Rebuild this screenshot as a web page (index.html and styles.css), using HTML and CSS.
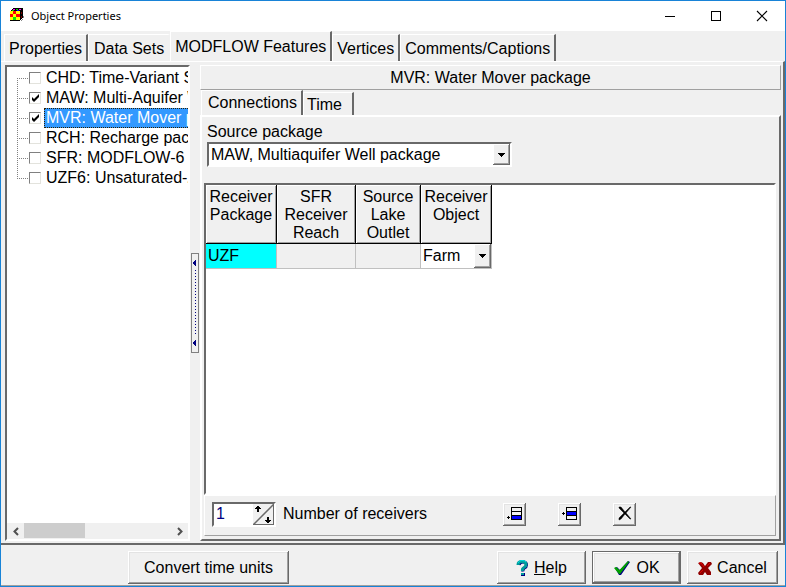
FILE: index.html
```html
<!DOCTYPE html>
<html lang="en">
<head>
<meta charset="utf-8">
<title>Object Properties</title>
<link rel="stylesheet" href="styles.css">
</head>
<body>
<div class="window">
  <header class="titlebar">
    <svg class="app-icon" width="16" height="16" viewBox="0 0 16 16" shape-rendering="crispEdges" aria-hidden="true">
      <path d="M1 4h1V3h1V2h1V1h10v10h-1v1h-1v1h-1v1H1z" fill="#000"/>
      <path d="M4 2h2v1H4zM10 2h2v1h-2z" fill="#f0f"/><path d="M7 2h2v1H7zM3 3h2v1H3z" fill="#0c0"/><path d="M8 3h2v1H8z" fill="#00f"/>
      <path d="M1 4h3v3H1zM7 4h4v3H7zM4 7h3v3H4zM1 10h3v3H1zM7 10h4v3H7z" fill="#ff0"/>
      <path d="M4 4h3v3H4zM7 7h4v3H7zM1 7h3v3H1z" fill="#f00"/>
      <path d="M4 10h3v3H4z" fill="#0e0"/><path d="M4 4h3v3H4z" fill="#f00"/>
      <path d="M12 5h1v2h-1zM12 9h1v2h-1z" fill="#800000"/>
      <path d="M14 9h1v2h-1zM13 12h1v1h-1zM12 13h1v1h-1z" fill="#888"/>
    </svg>
    <h1 class="title">Object Properties</h1>
    <div class="window-buttons">
      <button type="button" aria-label="Minimize"><svg width="12" height="12" shape-rendering="crispEdges"><path d="M1 6h10v1H1z"/></svg></button>
      <button type="button" aria-label="Maximize"><svg width="12" height="12" shape-rendering="crispEdges"><path d="M1.500 1.500h9v9h-9z" fill="none" stroke="#000"/></svg></button>
      <button type="button" aria-label="Close"><svg width="12" height="12"><path d="M1 1 11 11M11 1 1 11" fill="none" stroke="#000" stroke-width="1.100"/></svg></button>
    </div>
  </header>

  <nav class="tabs main-tabs" role="tablist">
    <button type="button" role="tab" class="tab">Properties</button>
    <button type="button" role="tab" class="tab flat">Data Sets</button>
    <button type="button" role="tab" class="tab active" aria-selected="true">MODFLOW Features</button>
    <button type="button" role="tab" class="tab">Vertices</button>
    <button type="button" role="tab" class="tab">Comments/Captions</button>
  </nav>

  <main class="page">
    <section class="tree">
      <ul class="tree-list">
        <li><label><input type="checkbox"><span>CHD: Time-Variant Specified-Head package</span></label></li>
        <li><label><input type="checkbox" checked><span>MAW: Multi-Aquifer Well package</span></label></li>
        <li class="selected"><label><input type="checkbox" checked><span>MVR: Water Mover package</span></label></li>
        <li><label><input type="checkbox"><span>RCH: Recharge package</span></label></li>
        <li><label><input type="checkbox"><span>SFR: MODFLOW-6 - Stream package</span></label></li>
        <li><label><input type="checkbox"><span>UZF6: Unsaturated-Zone Flow package</span></label></li>
      </ul>
      <div class="scrollbar">
        <button type="button" aria-label="Scroll left"><svg width="8" height="9"><path d="M6 1 2.500 4.500 6 8" fill="none" stroke="#505050" stroke-width="2"/></svg></button>
        <div class="track"><div class="thumb"></div></div>
        <button type="button" aria-label="Scroll right"><svg width="8" height="9"><path d="M2 1 5.500 4.500 2 8" fill="none" stroke="#505050" stroke-width="2"/></svg></button>
      </div>
    </section>

    <div class="splitter">
      <div class="grip">
        <svg width="4" height="6" shape-rendering="crispEdges"><path d="M3 0v6h-1v-1h-1v-1h-1v-2h1v-1h1v-1z" fill="#000080"/></svg>
        <span class="dots"></span>
        <svg width="4" height="6" shape-rendering="crispEdges"><path d="M3 0v6h-1v-1h-1v-1h-1v-2h1v-1h1v-1z" fill="#000080"/></svg>
      </div>
    </div>

    <section class="detail">
      <h2 class="package-title">MVR: Water Mover package</h2>
      <nav class="tabs sub-tabs" role="tablist">
        <button type="button" role="tab" class="tab active" aria-selected="true">Connections</button>
        <button type="button" role="tab" class="tab">Time</button>
      </nav>
      <div class="subpage">
        <div class="source">
          <label for="source">Source package</label>
          <div class="combo source-combo">
            <select id="source"><option>MAW, Multiaquifer Well package</option></select>
            <span class="drop"><svg width="7" height="4" shape-rendering="crispEdges"><path d="M0 0h7v1h-1v1h-1v1h-1v1h-1v-1h-1v-1h-1v-1h-1z"/></svg></span>
          </div>
        </div>
        <div class="grid-box">
          <table class="grid">
            <colgroup><col class="c-package"><col class="c-reach"><col class="c-outlet"><col class="c-object"></colgroup>
            <thead><tr>
              <th>Receiver<br>Package</th><th>SFR<br>Receiver<br>Reach</th><th>Source<br>Lake<br>Outlet</th><th>Receiver<br>Object</th>
            </tr></thead>
            <tbody><tr>
              <td class="current">UZF</td><td class="off"></td><td class="off"></td>
              <td class="edit"><div class="combo cell-combo">
                <select aria-label="Receiver Object"><option>Farm</option></select>
                <span class="drop"><svg width="7" height="4" shape-rendering="crispEdges"><path d="M0 0h7v1h-1v1h-1v1h-1v1h-1v-1h-1v-1h-1v-1h-1z"/></svg></span>
              </div></td>
            </tr></tbody>
          </table>
        </div>
        <div class="grid-tools">
          <div class="spin">
            <input id="count" type="text" inputmode="numeric" value="1">
            <button type="button" aria-label="Change number of receivers"><svg width="21" height="21">
              <path d="M0 21 21 0" stroke="#696969" stroke-width="1.500"/>
              <g shape-rendering="crispEdges"><path d="M5 2h1v1h1v1h1v1h-2v3h-2v-3h-2v-1h1v-1h1v-1h1z"/>
              <path d="M14 13h2v3h2v1h-1v1h-1v1h-2v-1h-1v-1h-1v-1h2z"/></g>
            </svg></button>
          </div>
          <label for="count">Number of receivers</label>
          <div class="row-buttons">
            <button type="button" class="bevel" aria-label="Add row"><svg width="16" height="16" shape-rendering="crispEdges"><path d="M4.500 1.500h10v12h-10zM4 5.500h11M4 9.500h11" fill="none" stroke="#000"/><path d="M5 10h9v3H5z" fill="#00f"/><path d="M0 11h3v1H0zM1 10h1v3H1z"/></svg></button>
            <button type="button" class="bevel" aria-label="Insert row"><svg width="16" height="16" shape-rendering="crispEdges"><path d="M4.500 1.500h10v12h-10zM4 5.500h11M4 9.500h11" fill="none" stroke="#000"/><path d="M5 6h9v3H5z" fill="#00f"/><path d="M0 7h3v1H0zM1 6h1v3H1z"/></svg></button>
            <button type="button" class="bevel" aria-label="Delete row"><svg width="16" height="16"><path d="M2 1h2L8 6 13 1h1L9 7 14 13H13L8 8 4 13 2 14 2 12 7 7 2 2z" fill="#000" stroke="#000" stroke-width=".5"/></svg></button>
          </div>
        </div>
      </div>
    </section>
  </main>

  <footer class="actions">
    <button type="button" class="bevel convert">Convert time units</button>
    <div class="dialog-buttons">
      <button type="button" class="bevel"><svg width="13" height="18" viewBox="0 0 13 18"><path d="M3 6Q3.500 3 7 3T10.500 6Q10.500 8 8.500 9T7 12.500" fill="none" stroke="#000080" stroke-width="3"/><path d="M2 6Q2 2.500 6 2.500T10 5.500Q10 7.500 8 8.500T6.500 12" fill="none" stroke="#009c9c" stroke-width="3"/><path d="M2 4Q3 1.500 6 1.500T10 3" fill="none" stroke="#00e0e0"/><path d="M5 14h4v3H5z" fill="#000080"/><path d="M5 14h3v2H5z" fill="#009c9c"/></svg><span><u>H</u>elp</span></button>
      <button type="button" class="bevel default"><svg width="18" height="16" viewBox="0 0 18 16"><path d="M2 8 4 7 7 10 15 1 17 2 8 15H6Z" fill="#000080"/><path d="M1 8 3 7 6.500 10 15 1 16 2 7 14H6Z" fill="#00a000"/></svg><span>OK</span></button>
      <button type="button" class="bevel"><svg width="14" height="15" viewBox="0 0 14 15"><path d="M0 2 3 1 5 2 7 5 10 1 13 1 14 3 10 7 13 11 13 14 9 14 7 11 5 14 1 14 0 12 4 7Z" fill="#900000"/><path d="M1 2 3 2 6 6M12 2 9 5M2 12 5 9" fill="none" stroke="#e00000"/></svg><span>Cancel</span></button>
    </div>
  </footer>
</div>
</body>
</html>
```
FILE: styles.css
```css
* { box-sizing: border-box; }

body {
  margin: 0;
  font: 16px/18px "Liberation Sans", Arial, sans-serif;
  color: #000;
}

button, select, input { font: inherit; color: inherit; margin: 0; }
button { padding: 0; border: 0; background: none; }
svg { display: block; flex: none; }

.window {
  display: flex;
  flex-direction: column;
  min-height: 100vh;
  border: 1px solid #1883d7;
  background: #f0f0f0;
}

/* title bar */
.titlebar {
  display: flex;
  align-items: center;
  height: 30px;
  padding: 0 0 0 8px;
  background: #fff;
}
.app-icon { margin-bottom: 2px; }
.title {
  flex: 1;
  margin: 0 0 0 6px;
  font: 11px/16px "Noto Sans", "Segoe UI", sans-serif;
}
.window-buttons { display: flex; }
.window-buttons button {
  display: flex;
  align-items: center;
  justify-content: center;
  width: 46px;
  height: 28px;
}

/* tabs */
.tabs { display: flex; align-items: flex-end; }
.tab {
  height: 27px;
  padding: 2px 4px 0;
  border-top: 1px solid #fff;
  border-left: 1px solid #fff;
  border-right: 2px solid #696969;
  white-space: nowrap;
}
.main-tabs { height: 30px; padding-left: 3px; }
.main-tabs .tab.flat { padding: 2px 4px 0 5px; border-right-color: #f0f0f0; }
.main-tabs .tab.active { height: 30px; padding: 0 4px; }

/* page */
.page {
  display: flex;
  flex: 1;
  padding: 3px 2px 2px 4px;
  border-top: 1px solid #fff;
  border-right: 2px solid #696969;
  border-bottom: 2px solid #696969;
}

/* package tree */
.tree {
  display: flex;
  flex-direction: column;
  width: 185px;
  background: #fff;
  border: 2px solid;
  border-color: #696969 #fff #fff #696969;
}
.tree-list {
  flex: 1;
  margin: 0;
  padding: 1px 0 0 10px;
  list-style: none;
  overflow: hidden;
}
.tree-list li {
  display: flex;
  align-items: center;
  height: 20px;
}
.tree-list li::before {
  content: "";
  flex: none;
  align-self: flex-start;
  width: 11px;
  height: 20px;
  background:
    repeating-linear-gradient(90deg, #808080 0 1px, transparent 1px 2px) 0 10px / 11px 1px no-repeat,
    repeating-linear-gradient(#808080 0 1px, transparent 1px 2px) 0 0 / 1px 20px no-repeat;
}
.tree-list li:first-child::before { background-position: 0 10px, 0 10px; }
.tree-list li:last-child::before { background-size: 11px 1px, 1px 10px; }
.tree-list label { display: flex; align-items: center; }
.tree-list input {
  flex: none;
  appearance: none;
  width: 12px;
  height: 12px;
  margin: 0 3px 0 1px;
  border: 1px solid;
  border-color: #808080 #e3e3dd #e3e3dd #808080;
  background: #fff;
}
.tree-list input:checked {
  background: #fff url("data:image/svg+xml,%3Csvg xmlns='http://www.w3.org/2000/svg' width='11' height='11'%3E%3Cpath d='M2 4v3l2 2 5-5V1L4 6z'/%3E%3C/svg%3E") no-repeat;
}
.tree-list span { padding: 0 2px; line-height: 20px; white-space: nowrap; }
.tree-list .selected span {
  color: #fff;
  background: #3399ff;
  outline: 1px dotted #302000;
  outline-offset: -1px;
}
.scrollbar { display: flex; height: 16px; background: #f0f0f0; }
.scrollbar button {
  display: flex;
  align-items: center;
  justify-content: center;
  width: 17px;
}
.track { flex: 1; }
.thumb { width: 61px; height: 15px; background: #cdcdcd; }

/* splitter */
.splitter { display: flex; align-items: flex-start; width: 10px; padding: 188px 0 0 1px; }
.grip {
  display: flex;
  flex-direction: column;
  align-items: center;
  gap: 4px;
  width: 8px;
  height: 100px;
  padding: 6px 0;
  border: 1px solid #808080;
}
.dots {
  flex: 1;
  width: 1px;
  background: repeating-linear-gradient(#000080 0 1px, transparent 1px 3px);
}

/* package detail */
.detail { display: flex; flex: 1; flex-direction: column; min-width: 0; }
.package-title {
  height: 25px;
  margin: 0;
  border: 1px solid;
  border-color: #fff #a0a0a0 #a0a0a0 #fff;
  font: inherit;
  line-height: 23px;
  text-align: center;
}
.sub-tabs { height: 25px; padding: 0 0 0 1px; }
.sub-tabs .tab { height: 23px; padding: 1px 10px 0 3px; }
.sub-tabs .tab.active { height: 25px; padding: 0 4px 0 6px; }
.subpage {
  display: flex;
  flex: 1;
  flex-direction: column;
  padding: 0 3px 3px 2px;
  border: 2px solid;
  border-color: #fff #696969 #696969 #fff;
}
.source { padding: 6px 3px 0; }
.source label { display: block; margin-bottom: 1px; }
.combo {
  position: relative;
  display: flex;
  background: #fff;
}
.combo select {
  flex: 1;
  width: 100%;
  appearance: none;
  border: 0;
  border-radius: 0;
  background: transparent;
}
.drop {
  position: absolute;
  top: 0;
  right: 0;
  bottom: 0;
  display: flex;
  align-items: center;
  justify-content: center;
  width: 17px;
  background: #f0f0f0;
  box-shadow: inset -1px -1px #696969, inset 1px 1px #fff, inset -2px -2px #a0a0a0;
  pointer-events: none;
}
.source-combo {
  width: 305px;
  height: 25px;
  border: 2px solid;
  border-color: #696969 #fff #fff #696969;
}
.source-combo select { padding: 0 18px 0 2px; }

/* receivers grid */
.grid-box {
  flex: 1;
  margin-top: 16px;
  background: #fff;
  border: 2px solid;
  border-color: #696969 #fff #fff #696969;
}
.grid { border-spacing: 0; table-layout: fixed; width: 286px; }
.c-package, .c-object { width: 71px; }
.c-reach { width: 79px; }
.c-outlet { width: 65px; }
.grid th {
  height: 59px;
  padding: 3px 0 0;
  border: solid #000;
  border-width: 0 1px 1px 0;
  background: #f0f0f0;
  box-shadow: inset 1px 1px #fff, inset -1px -1px #a0a0a0;
  font-weight: normal;
  vertical-align: top;
}
.grid td {
  height: 25px;
  padding: 0 2px;
  border: solid #c0c0c0;
  border-width: 0 1px 1px 0;
}
.grid .current { background: #00ffff; }
.grid .off { background: #f0f0f0; }
.grid .edit { padding: 0; }
.cell-combo { height: 24px; }
.cell-combo select { padding: 0 18px 0 2px; }

.grid-tools {
  display: flex;
  align-items: center;
  height: 41px;
  padding: 0 7px 3px;
  border: 1px solid;
  border-color: #fff #a0a0a0 #a0a0a0 #fff;
}
.spin {
  display: flex;
  width: 64px;
  height: 25px;
  margin-right: 7px;
  background: #fff;
  border: 2px solid;
  border-color: #696969 #fff #fff #696969;
}
.spin input {
  flex: 1;
  min-width: 0;
  padding: 0 2px;
  border: 0;
  background: transparent;
  color: #000080;
}
.spin button { background: #f0f0f0; box-shadow: inset -1px -1px #696969; }
.row-buttons { display: flex; gap: 32px; margin-left: 76px; }
.row-buttons button { width: 23px; height: 23px; }

/* raised buttons */
.bevel {
  display: flex;
  align-items: center;
  justify-content: center;
  gap: 5px;
  box-shadow: inset -1px -1px #696969, inset 1px 1px #fff, inset -2px -2px #a0a0a0, inset 2px 2px #e3e3e3;
}
.bevel.default {
  border: 1px solid #696969;
}

/* footer */
.actions {
  display: flex;
  justify-content: space-between;
  height: 41px;
  padding: 6px 7px 0 127px;
  border-bottom: 1px solid #a0a0a0;
}
.actions .bevel { height: 33px; padding-top: 1px; }
.convert { width: 161px; }
.dialog-buttons { display: flex; gap: 6px; }
.dialog-buttons .bevel { width: 89px; }
.dialog-buttons .bevel:last-child { width: 91px; }
```
